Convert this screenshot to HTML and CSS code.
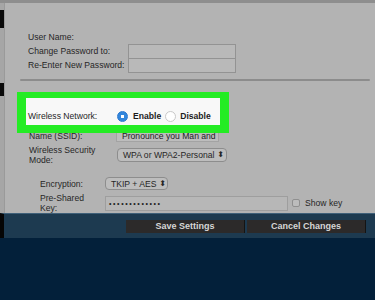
FILE: index.html
```html
<!DOCTYPE html>
<html lang="en">
<head>
  <meta charset="UTF-8">
  <title>Wireless Settings</title>
  <link rel="stylesheet" href="styles.css">
</head>
<body>
  <div class="screen">
    <div class="panel">
      <div class="edge"></div>
      <div class="content">
        <div class="account">
          <div class="row"><span class="label">User Name:</span></div>
          <div class="row"><span class="label">Change Password to:</span><span class="field pw"></span></div>
          <div class="row"><span class="label">Re-Enter New Password:</span><span class="field pw"></span></div>
        </div>
        <div class="rule"></div>

        <div class="highlight">
          <div class="wl-row">
            <span class="wl-label">Wireless Network:</span>
            <span class="radio on"></span><b class="opt">Enable</b>
            <span class="radio"></span><b class="opt">Disable</b>
          </div>
        </div>

        <div class="row ssid">
          <span class="label mid">Name (SSID):</span>
          <span class="field ssid-field">Pronounce you Man and</span>
        </div>
        <div class="row security">
          <span class="label mid two">Wireless Security<br>Mode:</span>
          <span class="select wpa">WPA or WPA2-Personal <i class="arrows">&#x2B0D;</i></span>
        </div>
        <div class="row enc">
          <span class="label low">Encryption:</span>
          <span class="select tkip">TKIP + AES <i class="arrows">&#x2B0D;</i></span>
        </div>
        <div class="row key">
          <span class="label low two">Pre-Shared<br>Key:</span>
          <span class="field key-field">&bull;&bull;&bull;&bull;&bull;&bull;&bull;&bull;&bull;&bull;&bull;&bull;&bull;</span>
          <span class="check"></span>
          <span class="show">Show key</span>
        </div>
      </div>
    </div>

    <div class="band">
      <button class="btn save">Save Settings</button>
      <button class="btn cancel">Cancel Changes</button>
    </div>
  </div>
</body>
</html>
```

FILE: styles.css
```css
body {
  margin: 0;
  background: #03203a;
  font-family: 'Liberation Sans', Arial, sans-serif;
  color: #262626;
}
.screen {
  width: 375px;
  height: 300px;
  overflow: hidden;
}
.panel {
  height: 213px;
  box-sizing: border-box;
  border-top: 3px solid #8e8e8e;
  background: #b3b3b3;
  display: flex;
}
.edge {
  width: 5px;
  flex: none;
  background: linear-gradient(#a6a6a6 0, #a6a6a6 7px, #0a0a0a 7px, #0a0a0a 25px, #a6a6a6 25px, #a6a6a6 80px, #0a0a0a 80px, #0a0a0a 93px, #a6a6a6 93px);
  border-right: 1px solid #9a9a9a;
  box-sizing: border-box;
}
.content {
  flex: 1;
  font-size: 8.6px;
}
.account {
  padding-top: 27px;
}
.row {
  display: flex;
  align-items: center;
  height: 14px;
}
.label {
  width: 100px;
  padding-left: 23px;
  flex: none;
  line-height: 10px;
}
.field {
  box-sizing: border-box;
  border: 1px solid #939393;
  background: #b9b9b9;
  display: block;
}
.pw {
  width: 108px;
  height: 15px;
}
.rule {
  height: 2px;
  margin: 7px 5px 0 15px;
  border-radius: 1px;
  background: #8c8c8c;
}
.highlight {
  position: relative;
  z-index: 1;
  width: 212px;
  box-sizing: border-box;
  margin: 11px 0 0 12px;
  border-style: solid;
  border-color: #24ec24;
  border-width: 6px 9px 8px 9px;
  background: #f8f8f8;
  height: 41px;
}
.wl-row {
  display: flex;
  align-items: center;
  height: 10px;
  padding: 13px 0 0 2px;
}
.wl-label {
  width: 89px;
  flex: none;
}
.radio {
  width: 11px;
  height: 11px;
  box-sizing: border-box;
  border-radius: 50%;
  border: 1px solid #c9c9c9;
  background: #fff;
  margin-right: 4px;
  flex: none;
}
.radio.on {
  border-color: #2c78cf;
  background: radial-gradient(circle, #fff 0, #fff 1.5px, #3286dc 2px);
  margin-right: 5px;
}
.opt {
  font-size: 8.6px;
  color: #1c1c1c;
  margin-right: 4px;
}
.ssid {
  margin-top: -3px;
  height: 12px;
}
.label.mid {
  width: 87px;
  padding-left: 24px;
}
.ssid-field {
  width: 103px;
  height: 12px;
  line-height: 10px;
  padding-left: 5px;
  background: #bdbdbd;
  border-color: #a3a3a3;
  overflow: hidden;
  white-space: nowrap;
  color: #222;
}
.security {
  margin-top: 3px;
  height: 20px;
}
.label.two {
  line-height: 10px;
}
.select {
  box-sizing: border-box;
  border: 1px solid #8d8d8d;
  border-radius: 4px;
  background: #bdbdbd;
  height: 14px;
  line-height: 12px;
  padding-left: 5px;
  white-space: nowrap;
  display: flex;
  justify-content: space-between;
  padding-right: 3px;
}
.wpa {
  width: 110px;
  margin-left: 1px;
}
.arrows {
  font-style: normal;
  font-family: 'DejaVu Sans', sans-serif;
  font-size: 8px;
  margin-left: 3px;
}
.enc {
  margin-top: 12px;
  height: 13px;
}
.label.low {
  width: 65px;
  padding-left: 35px;
}
.tkip {
  width: 63px;
  height: 13px;
}
.key {
  margin-top: 3px;
  height: 20px;
}
.key-field {
  width: 183px;
  height: 15px;
  line-height: 13px;
  padding-left: 3px;
  letter-spacing: 1.6px;
  font-size: 7px;
  color: #202020;
  background: #b7b7b7;
  border-color: #9e9e9e;
}
.check {
  width: 8px;
  height: 8px;
  box-sizing: border-box;
  border: 1px solid #8f8f8f;
  border-radius: 2px;
  background: #bcbcbc;
  margin-left: 4px;
}
.show {
  margin-left: 5px;
}
.band {
  height: 25px;
  box-sizing: border-box;
  background: #1d3a50;
  border-top: 1px solid #3f6079;
  border-left: 4px solid #050505;
  display: flex;
  gap: 2px;
  padding: 6px 0 0 122px;
}
.btn {
  width: 119px;
  height: 13px;
  padding: 0;
  border: none;
  border-right: 1px solid #141414;
  background: #2c2a2a;
  color: #d6d6d6;
  font-family: 'Liberation Sans', Arial, sans-serif;
  font-weight: bold;
  font-size: 9px;
  line-height: 13px;
}
```
